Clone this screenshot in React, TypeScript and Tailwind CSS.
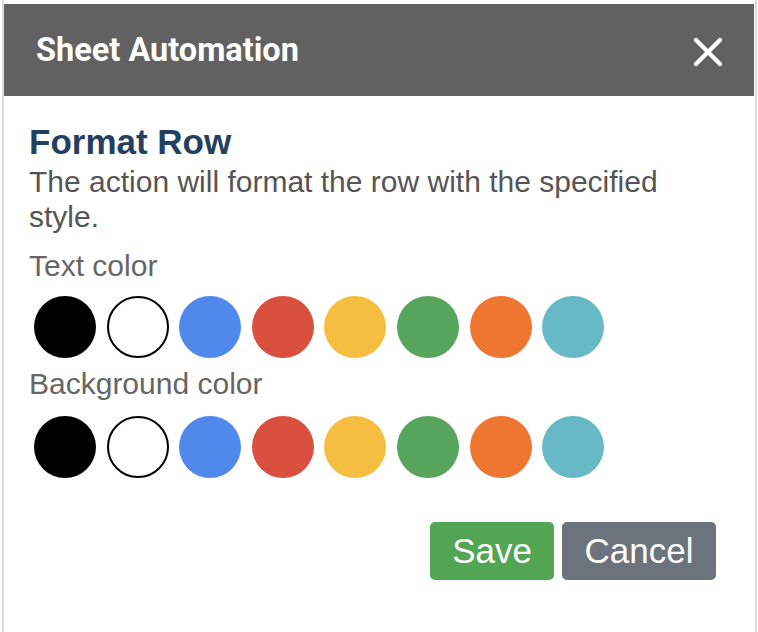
import React from "react";

const colors = [
  { bg: "bg-[#000000]", border: "" },
  { bg: "bg-white", border: "border-2 border-black" },
  { bg: "bg-[#5088ec]", border: "" },
  { bg: "bg-[#d9503f]", border: "" },
  { bg: "bg-[#f5be41]", border: "" },
  { bg: "bg-[#57a55d]", border: "" },
  { bg: "bg-[#ef7631]", border: "" },
  { bg: "bg-[#67bac5]", border: "" },
];

function Swatches() {
  return (
    <div className="flex gap-[10.6px] pl-[5px]">
      {colors.map((c, i) => (
        <button
          key={i}
          className={`w-[62px] h-[62px] rounded-full shrink-0 ${c.bg} ${c.border}`}
        />
      ))}
    </div>
  );
}

export default function App() {
  return (
    <div className="w-[758px] h-[632px] overflow-hidden bg-white">
      <div className="ml-[2px] w-[755px] h-[632px] border-l-2 border-r-2 border-[#dcdcdc] pt-[4px]">
        <div className="bg-white h-full mr-[1px]">
          <div className="h-[92px] bg-[#616161] flex items-center justify-between pl-[32px] pr-[31px]">
            <div
              className="text-white text-[32.5px] leading-[38px] font-bold"
              style={{ fontFamily: "Roboto, 'Liberation Sans', sans-serif" }}
            >
              Sheet Automation
            </div>
            <svg width="30" height="30" viewBox="0 0 30 30" className="mt-[3px]">
              <path
                d="M3 3 L27 27 M27 3 L3 27"
                stroke="white"
                strokeWidth="4.2"
                strokeLinecap="round"
              />
            </svg>
          </div>
          <div
            className="pl-[25px] pr-[38px] pt-[27px]"
            style={{ fontFamily: "'Liberation Sans', Arial, sans-serif" }}
          >
            <div className="text-[35px] leading-[38px] font-bold text-[#243f60]">
              Format Row
            </div>
            <div className="mt-[3px] text-[30px] leading-[35px] text-[#555555]">
              The action will format the row with the specified style.
            </div>
            <div className="mt-[14.6px] text-[30px] leading-[34px] text-[#666666]">
              Text color
            </div>
            <div className="mt-[13.4px]">
              <Swatches />
            </div>
            <div className="mt-[8.6px] text-[30px] leading-[34px] text-[#666666]">
              Background color
            </div>
            <div className="mt-[15.4px]">
              <Swatches />
            </div>
            <div className="mt-[44px] flex justify-end gap-[8px]">
              <button className="h-[58px] px-[22px] rounded-[5px] bg-[#52a552] text-white text-[35px] leading-[38px]">
                Save
              </button>
              <button className="h-[58px] px-[22.5px] rounded-[5px] bg-[#6c737c] text-white text-[35px] leading-[38px]">
                Cancel
              </button>
            </div>
          </div>
        </div>
      </div>
    </div>
  );
}
